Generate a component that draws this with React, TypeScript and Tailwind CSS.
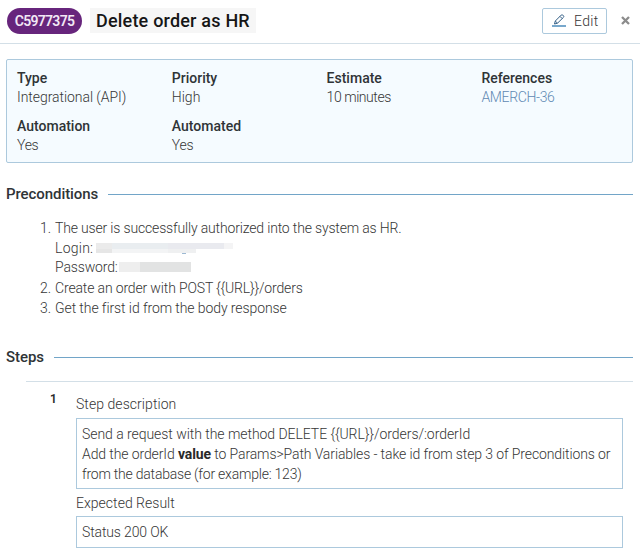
import type { ReactNode } from "react";

type FieldProps = { label: ReactNode; value: ReactNode; link?: boolean };

function Field({ label, value, link }: FieldProps) {
  return (
    <div className="h-12 w-[154.8px] shrink-0">
      <div className="h-5 text-[14px] leading-5 font-medium text-[#2f3437]">{label}</div>
      <div className={link ? "h-5 leading-[19px] text-[#6089b3]" : "h-5 leading-[19px]"}>{value}</div>
    </div>
  );
}

function SectionTitle({ children }: { children: ReactNode }) {
  return (
    <div className="flex h-5 items-center">
      <h2 className="mr-[10px] text-[15px] leading-5 font-medium tracking-[-0.07px] text-[#2f3437]">{children}</h2>
      <div className="h-px flex-1 bg-[#72a5c8]" />
    </div>
  );
}

export default function App() {
  return (
    <div className="h-[557px] w-[640px] overflow-hidden bg-white font-['Roboto',sans-serif] text-[14px] font-[350] whitespace-nowrap text-[#363636]">
      <header className="flex h-11 items-start border-b border-[#d3dfe7] pt-2 pl-[7px]">
        <div className="flex h-[26px] w-[75px] items-center justify-center rounded-full bg-[#67257c] text-[14px] font-semibold text-[#f2e8f5]">
          <span className="tracking-[-0.7px]">C5977375</span>
        </div>
        <div className="ml-2 flex h-[25px] w-[166px] items-center bg-[#f6f6f6] pl-[6px] text-[18px] font-medium text-[#161616]">
          <span className="tracking-[0.2px]">Delete order as HR</span>
        </div>
        <button className="ml-auto flex h-[26px] w-[65px] items-center rounded-[2px] border border-[#acc9dd] pl-[9px]">
          <svg width="14" height="14" viewBox="0 0 14 14" fill="none">
            <path d="M2.5 10 3.3 7 9.2 1.1Q10 .4 10.8 1.1L11.5 1.8Q12.2 2.6 11.4 3.4L5.5 9.2 2.5 10ZM8 2.4 10.2 4.6M3.4 7.1 5.4 9.1" stroke="#356087" strokeWidth="1" />
            <path d="M0 12H14" stroke="#78a8cc" strokeWidth="2" />
          </svg>
          <span className="ml-[8px] tracking-[0.3px]">Edit</span>
        </button>
        <svg className="mt-[8px] mr-[10px] ml-[14px]" width="9" height="9" viewBox="0 0 9 9">
          <path d="M1 1 8 8M8 1 1 8" stroke="#8c8c8c" strokeWidth="2.3" />
        </svg>
      </header>

      <main className="px-[6px] pt-[15px]">
        <section className="flex h-[104px] w-[627px] flex-wrap content-start rounded-[2px] border border-[#acc9dd] bg-[#f5fbff] pt-2 pl-[10px]">
          <Field label="Type" value={<span className="tracking-[-0.06px]">Integrational (API)</span>} />
          <Field label="Priority" value="High" />
          <Field label="Estimate" value={<span className="tracking-[-0.45px]">10 minutes</span>} />
          <div className="w-[148px]">
            <Field label="References" value={<span className="tracking-[-0.35px]">AMERCH-36</span>} link />
          </div>
          <Field label="Automation" value={<span className="tracking-[-0.3px]">Yes</span>} />
          <Field label="Automated" value={<span className="tracking-[-0.3px]">Yes</span>} />
        </section>

        <section className="mt-[21px] w-[627px]">
          <SectionTitle>Preconditions</SectionTitle>
          <ol className="mt-[14px] pl-[34px] leading-5">
            <li className="mb-px flex">
              <span className="w-[15px]">1.</span>
              <div>
                <div className="h-5"><span className="tracking-[-0.165px]">The user is successfully authorized into the system as HR.</span></div>
                <div className="flex h-[19px]">
                  <span className="w-[41px] tracking-[0.25px]">Login:</span>
                  <div className="mt-[5px]">
                    <div className="flex h-[6px]">
                      <div className="w-[16px] bg-[#ebebeb]" />
                      <div className="w-[56px] bg-[#e9edf0]" />
                      <div className="w-[56px] bg-[#e9eaef]" />
                      <div className="w-[9px] bg-[#f4f4f5]" />
                    </div>
                    <div className="flex h-1">
                      <div className="w-[16px] bg-[#e6e6e6]" />
                      <div className="w-[56px] bg-[#f3f4f5]" />
                      <div className="w-[28px] bg-[#eff0f1]" />
                    </div>
                    <div className="ml-[86px] h-px w-1 bg-[#9db9d3]" />
                  </div>
                </div>
                <div className="flex h-5">
                  <span className="w-[64px] tracking-[-0.15px]">Password:</span>
                  <div className="mt-[5px] flex h-[10px]">
                    <div className="w-[21px] bg-[#eeeeee]" />
                    <div className="w-[51px] bg-[#e2e3e3]" />
                  </div>
                </div>
              </div>
            </li>
            <li className="flex"><span className="w-[15px]">2.</span><span className="tracking-[-0.15px]">Create an order with POST {"{{URL}}"}/orders</span></li>
            <li className="flex"><span className="w-[15px]">3.</span><span className="tracking-[-0.09px]">Get the first id from the body response</span></li>
          </ol>
        </section>

        <section className="mt-[29px] w-[627px]">
          <SectionTitle>Steps</SectionTitle>
          <div className="mt-[14px] ml-5 flex border-t border-[#d3dfe7] pt-[7px]">
            <div className="w-[50px] pl-[24px] text-[12px] leading-5 font-semibold text-[#292929]">1</div>
            <div className="w-[547px] pt-[5px] leading-5">
              <div className="tracking-[0.06px]">Step description</div>
              <div className="mt-[4px] h-[71px] border border-[#acc9dd] pt-[5px] pl-[5px]">
                <div><span className="tracking-[-0.05px]">Send a request with the method DELETE {"{{URL}}"}/orders/:orderId</span></div>
                <div><span className="tracking-[-0.11px]">Add the orderId <b className="font-bold text-[#292929]">value</b> to Params&gt;Path Variables - take id from step 3 of Preconditions or</span></div>
                <div><span className="tracking-[-0.22px]">from the database (for example: 123)</span></div>
              </div>
              <div className="mt-[4px] tracking-[0.02px]">Expected Result</div>
              <div className="mt-[3px] h-8 border border-[#acc9dd] pt-[5px] pl-[5px]"><span className="tracking-[-0.14px]">Status 200 OK</span></div>
            </div>
          </div>
        </section>
      </main>
    </div>
  );
}
